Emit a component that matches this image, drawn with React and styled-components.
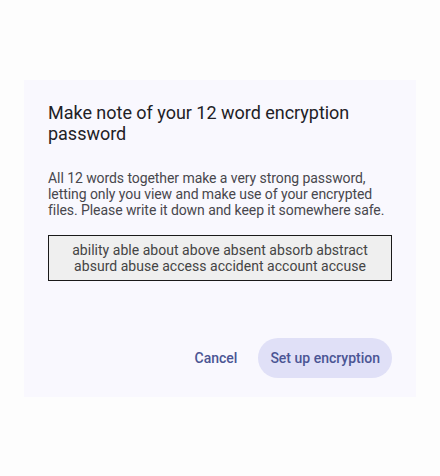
import React from "react";
import styled, { createGlobalStyle } from "styled-components";

const Global = createGlobalStyle`
  html, body { margin: 0; padding: 0; background: #fdfdfd; }
  body { font-family: Roboto, "Noto Sans", sans-serif; }
`;

const Page = styled.div`
  width: 440px;
  height: 476px;
  padding: 80px 24px;
  box-sizing: border-box;
`;

const Dialog = styled.div`
  background: #f9f8fe;
  padding: 22px 24px 19px;
  display: flex;
  flex-direction: column;
`;

const Title = styled.h2`
  margin: 0;
  font-size: 18px;
  line-height: 21px;
  font-weight: 400;
  color: #222126;
  letter-spacing: -0.02px;
`;

const Body = styled.p`
  margin: 26px 0 0;
  font-size: 14px;
  line-height: 16px;
  color: #48474d;
  letter-spacing: -0.07px;
`;

const Words = styled.div`
  margin-top: 17px;
  border: 1px solid #1a1a1a;
  background: #efefef;
  padding: 6px 8px;
  text-align: center;
  font-size: 14px;
  line-height: 16px;
  color: #444444;
  letter-spacing: 0.03px;
`;

const Actions = styled.div`
  margin-top: 57px;
  display: flex;
  justify-content: flex-end;
  gap: 9px;
`;

const Button = styled.button`
  height: 40px;
  padding: 0 12px;
  border: none;
  border-radius: 20px;
  background: ${(p) => (p.$filled ? "#e0e0f7" : "transparent")};
  color: #4b5594;
  font-family: Roboto, sans-serif;
  font-size: 14px;
  font-weight: 500;
  cursor: pointer;
`;

export default function App() {
  return (
    <Page>
      <Global />
      <Dialog>
        <Title>Make note of your 12 word encryption password</Title>
        <Body>
          All 12 words together make a very strong password, letting only you
          view and make use of your encrypted files. Please write it down and
          keep it somewhere safe.
        </Body>
        <Words>
          ability able about above absent absorb abstract absurd abuse access
          accident account accuse
        </Words>
        <Actions>
          <Button>Cancel</Button>
          <Button $filled>Set up encryption</Button>
        </Actions>
      </Dialog>
    </Page>
  );
}
